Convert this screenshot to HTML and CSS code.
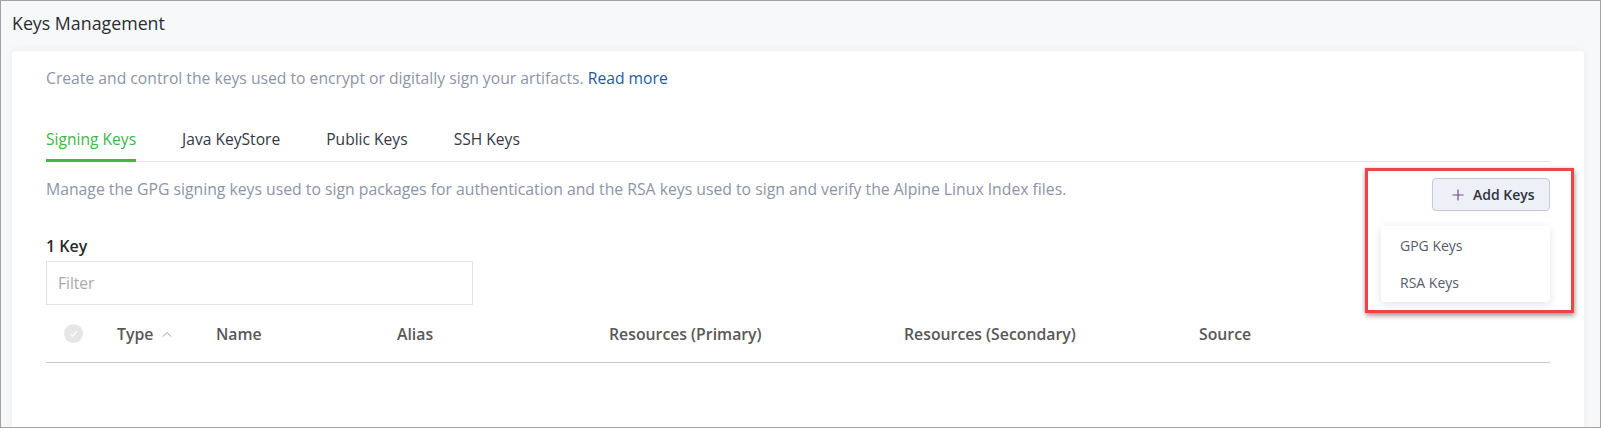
FILE: index.html
```html
<!DOCTYPE html>
<html lang="en">
<head>
<meta charset="utf-8">
<title>Keys Management</title>
<link rel="stylesheet" href="styles.css">
</head>
<body>
<div class="frame">
  <header class="page-header">
    <h1 class="page-title">Keys Management</h1>
  </header>
  <main class="card">
    <p class="intro">Create and control the keys used to encrypt or digitally sign your artifacts. <a class="link" href="#">Read more</a></p>

    <nav class="tabs">
      <a class="tab active" href="#">Signing Keys</a>
      <a class="tab" href="#">Java KeyStore</a>
      <a class="tab" href="#">Public Keys</a>
      <a class="tab" href="#">SSH Keys</a>
    </nav>

    <div class="desc-row">
      <p class="tab-desc">Manage the GPG signing keys used to sign packages for authentication and the RSA keys used to sign and verify the Alpine Linux Index files.</p>
      <div class="add-wrap">
        <button class="add-btn" type="button">
          <svg class="plus" width="12" height="12" viewBox="0 0 12 12"><path d="M6 0.5V11.5M0.5 6H11.5" stroke="#6b4a8c" stroke-width="1.2" fill="none"/></svg>
          <span>Add Keys</span>
        </button>
        <ul class="menu">
          <li class="menu-item">GPG Keys</li>
          <li class="menu-item">RSA Keys</li>
        </ul>
        <div class="highlight"></div>
      </div>
    </div>

    <h2 class="count">1 Key</h2>
    <input class="filter" type="text" placeholder="Filter">

    <div class="table-head">
      <div class="col col-check"><span class="check">
        <svg width="19" height="19" viewBox="0 0 19 19"><circle cx="9.5" cy="9.5" r="9.5" fill="#e6e6e6"/><path d="M6 9.8l2.4 2.4 4.8-5" stroke="#ffffff" stroke-width="1.2" fill="none"/></svg>
      </span></div>
      <div class="col">Type <svg class="caret" width="10" height="6" viewBox="0 0 10 6"><path d="M1 5.5L5 1.5 9 5.5" stroke="#9a9a9a" stroke-width="1" fill="none"/></svg></div>
      <div class="col">Name</div>
      <div class="col">Alias</div>
      <div class="col">Resources (Primary)</div>
      <div class="col">Resources (Secondary)</div>
      <div class="col">Source</div>
    </div>
  </main>
</div>
</body>
</html>
```

FILE: styles.css
```css
* { box-sizing: border-box; }

html, body {
  margin: 0;
  padding: 0;
  background: #ffffff;
}

body {
  font-family: "Open Sans", "Noto Sans", "Liberation Sans", sans-serif;
}

.frame {
  width: 1601px;
  height: 428px;
  border: 1px solid #a2a2a2;
  background: #f7f8fa;
  overflow: hidden;
  display: flex;
  flex-direction: column;
}

.page-header {
  height: 50px;
  padding: 10px 0 0 11px;
  flex: none;
}

.page-title {
  margin: 0;
  font-size: 17.8px;
  line-height: 24px;
  font-weight: 400;
  color: #2b2d33;
}

.card {
  flex: 1;
  margin: 0 16px 0 11px;
  background: #ffffff;
  border-radius: 3px 3px 0 0;
  padding: 16px 34px 0 34px;
  box-shadow: 0 0 10px rgba(0, 0, 0, 0.06);
}

.intro {
  margin: 0;
  font-size: 15.7px;
  line-height: 22px;
  color: #8d94a8;
}

.link {
  color: #1d5aa3;
  text-decoration: none;
}

.tabs {
  margin-top: 39px;
  display: flex;
  gap: 46px;
  border-bottom: 1px solid #e4e5e8;
}

.tab {
  display: block;
  font-size: 15.6px;
  line-height: 22px;
  color: #343846;
  text-decoration: none;
  padding-bottom: 9px;
  border-bottom: 3px solid transparent;
  margin-bottom: -1px;
}

.tab.active {
  color: #43b549;
  border-bottom-color: #3fb84a;
}

.desc-row {
  margin-top: 16px;
  display: flex;
  justify-content: space-between;
  align-items: flex-start;
}

.tab-desc {
  margin: 0;
  font-size: 15.75px;
  line-height: 22px;
  color: #8d94a8;
}

.add-wrap {
  position: relative;
}

.add-btn {
  width: 118px;
  height: 33px;
  display: flex;
  align-items: center;
  gap: 9px;
  padding: 0 0 0 19px;
  background: #eef0f7;
  border: 1px solid #c4cadf;
  border-radius: 4px;
  font-family: "Open Sans", "Noto Sans", sans-serif;
  font-size: 14px;
  font-weight: 600;
  color: #2f3340;
}

.plus { flex: none; }

.menu {
  position: absolute;
  top: 48px;
  right: 0;
  width: 169px;
  margin: 0;
  padding: 1px 0;
  list-style: none;
  background: #ffffff;
  border-radius: 4px;
  box-shadow: 0 2px 8px rgba(40, 50, 80, 0.14);
  z-index: 2;
}

.menu-item {
  height: 37px;
  line-height: 37px;
  padding-left: 19px;
  font-size: 14px;
  color: #555b6c;
}

.highlight {
  position: absolute;
  top: -10px;
  left: -67px;
  width: 209px;
  height: 145px;
  border: 3px solid #f04444;
  box-shadow: 1px 3px 5px rgba(0, 0, 0, 0.35), -1px 0 3px rgba(0, 0, 0, 0.15);
  z-index: 3;
  pointer-events: none;
}

.count {
  margin: 24px 0 0 0;
  font-size: 16px;
  line-height: 22px;
  font-weight: 600;
  color: #2b2b2b;
}

.filter {
  display: block;
  margin-top: 4px;
  width: 427px;
  height: 44px;
  border: 1px solid #e3e3e3;
  border-radius: 0;
  padding: 0 11px;
  font-family: "Open Sans", "Noto Sans", sans-serif;
  font-size: 15.5px;
  color: #333;
  outline: none;
}

.filter::placeholder {
  color: #a9a9a9;
}

.table-head {
  display: grid;
  grid-template-columns: 71px 99px 181px 212px 295px 295px 1fr;
  height: 58px;
  align-items: center;
  border-bottom: 1px solid #c9c9c9;
}

.col {
  font-size: 15.8px;
  font-weight: 600;
  color: #585858;
  display: flex;
  align-items: center;
  gap: 9px;
}

.col-check {
  padding-left: 18px;
}

.check {
  display: block;
  width: 19px;
  height: 19px;
}

.check svg { display: block; }

.caret { margin-top: 1px; }
```
